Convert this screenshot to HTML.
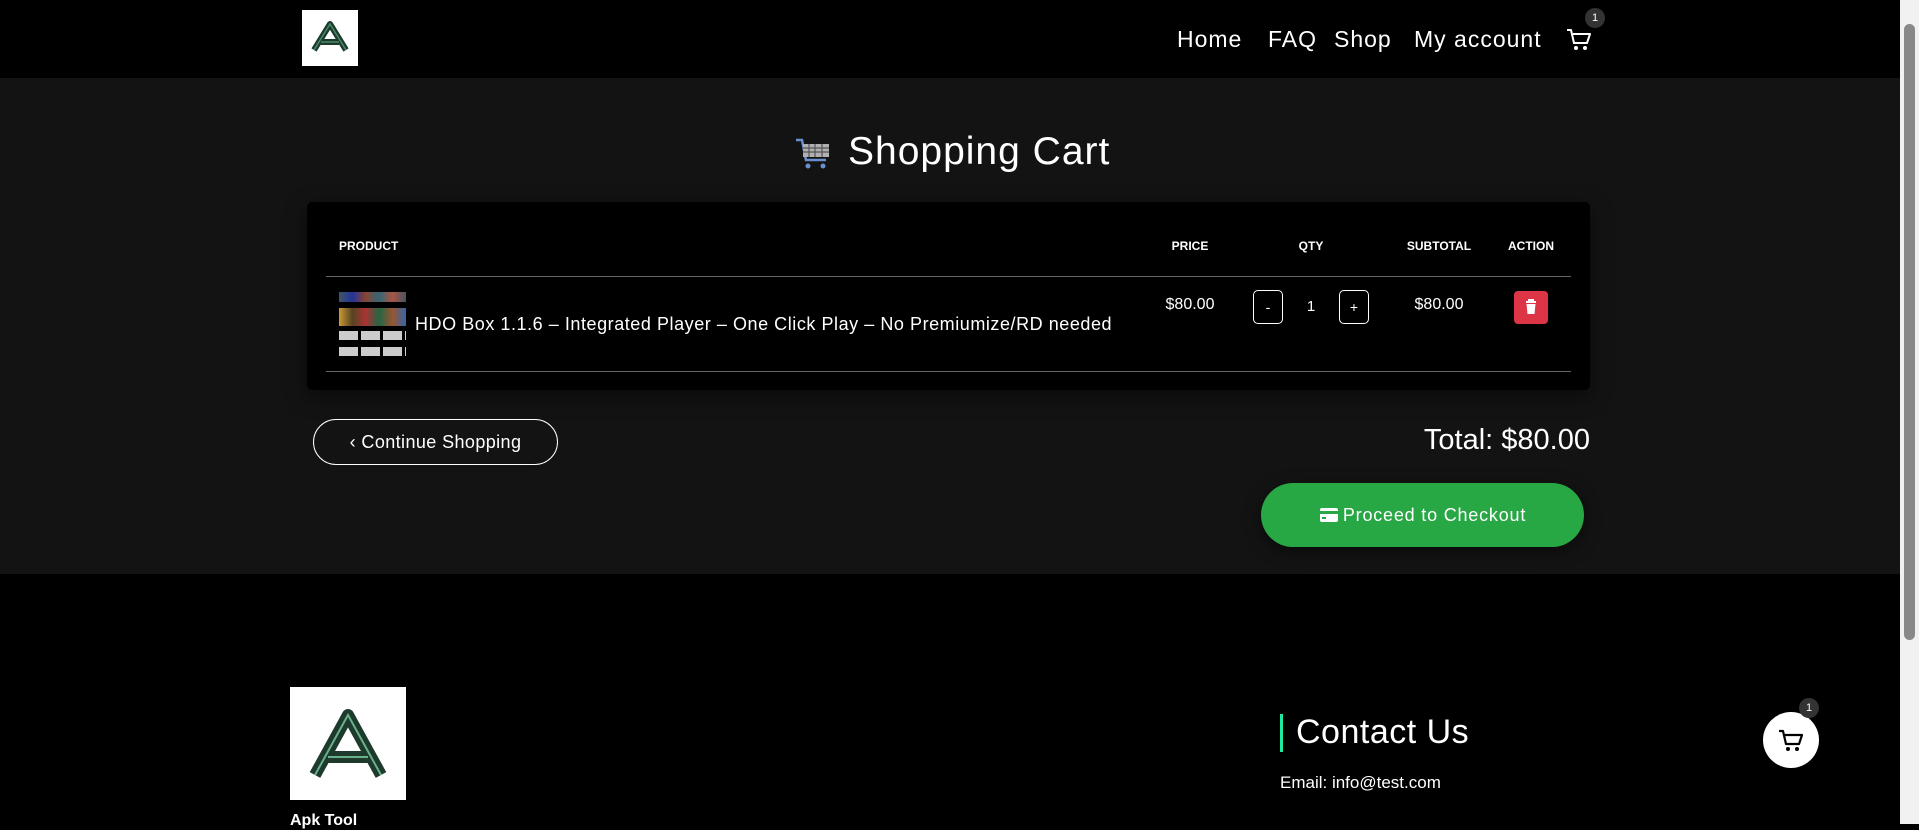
<!DOCTYPE html>
<html><head><meta charset="utf-8"><style>
*{box-sizing:border-box;margin:0;padding:0}
body{width:1919px;height:824px;overflow:hidden;background:#000;font-family:"Liberation Sans",sans-serif;color:#fff;position:relative}
.abs{position:absolute}
.hdr{left:0;top:0;width:1900px;height:78px;background:#000}
.main{left:0;top:78px;width:1900px;height:496px;background:#131313}
.nav{top:26px;font-size:23px;letter-spacing:1px;white-space:nowrap}
.th{top:239px;font-size:12px;font-weight:bold;transform:translateX(-50%)}
.btn{border:1px solid #fff;border-radius:5px;display:flex;align-items:center;justify-content:center;font-size:14px}
</style></head><body>
<div class="abs hdr"></div>
<div class="abs main"></div>
<div class="abs" style="left:302px;top:10px;width:56px;height:56px;background:#fff">
<svg width="56" height="56" viewBox="0 0 56 56"><path d="M12 40 L28 14 L44 40 M19 32 H37" fill="none" stroke="#1d3a2c" stroke-width="6" stroke-linejoin="round"/><path d="M12 40 L28 14 L44 40 M19 32 H37" fill="none" stroke="#4a8a6a" stroke-width="1.5"/></svg></div>
<div class="abs nav" style="left:1177px">Home</div>
<div class="abs nav" style="left:1268px">FAQ</div>
<div class="abs nav" style="left:1334px">Shop</div>
<div class="abs nav" style="left:1414px">My account</div>
<svg class="abs" style="left:1566px;top:28px" width="26" height="24" viewBox="0 0 26 24"><path d="M1 2h4l3 13h13l3-9H7" fill="none" stroke="#fff" stroke-width="2" stroke-linejoin="round"/><circle cx="10" cy="20" r="2" fill="#fff"/><circle cx="19" cy="20" r="2" fill="#fff"/></svg>
<div class="abs" style="left:1585px;top:8px;width:20px;height:20px;border-radius:50%;background:#333;font-size:11px;display:flex;align-items:center;justify-content:center">1</div>
<svg class="abs" style="left:794px;top:137px" width="38" height="34" viewBox="0 0 38 34"><path d="M2 3h6l4 20h20" fill="none" stroke="#6a8fcf" stroke-width="2.5"/><rect x="9" y="7" width="26" height="13" fill="#b0b0b0"/><path d="M9 11h26M9 15h26M15 7v13M21 7v13M28 7v13" stroke="#555" stroke-width="1.2"/><circle cx="14" cy="29" r="2.5" fill="#6a8fcf"/><circle cx="29" cy="29" r="2.5" fill="#6a8fcf"/></svg>
<div class="abs" style="left:848px;top:130px;font-size:39px;letter-spacing:1px">Shopping Cart</div>
<div class="abs" style="left:307px;top:202px;width:1283px;height:188px;background:#000;border-radius:5px;box-shadow:0 6px 20px rgba(0,0,0,.5)"></div>
<div class="abs th" style="left:339px;transform:none">PRODUCT</div>
<div class="abs th" style="left:1190px">PRICE</div>
<div class="abs th" style="left:1311px">QTY</div>
<div class="abs th" style="left:1439px">SUBTOTAL</div>
<div class="abs th" style="left:1531px">ACTION</div>
<div class="abs" style="left:326px;top:276px;width:1245px;height:1px;background:#666"></div>
<div class="abs" style="left:326px;top:371px;width:1245px;height:1px;background:#666"></div>
<div class="abs" style="left:339px;top:292px;width:67px;height:65px">
<div style="height:10px;background:linear-gradient(90deg,#456,#239,#843,#367,#a54,#456)"></div>
<div style="height:18px;margin-top:6px;background:linear-gradient(90deg,#c93,#542,#a33,#264,#953,#36a)"></div>
<div style="height:9px;margin-top:5px;background:repeating-linear-gradient(90deg,#ccc 0 19px,#000 19px 22px)"></div>
<div style="height:9px;margin-top:7px;background:repeating-linear-gradient(90deg,#ccc 0 19px,#000 19px 22px)"></div>
</div>
<div class="abs" style="left:415px;top:314px;font-size:18px;letter-spacing:0.55px;white-space:nowrap">HDO Box 1.1.6 – Integrated Player – One Click Play – No Premiumize/RD needed</div>
<div class="abs" style="left:1190px;top:296px;font-size:16px;transform:translateX(-50%)">$80.00</div>
<div class="abs btn" style="left:1253px;top:290px;width:30px;height:34px">-</div>
<div class="abs" style="left:1311px;top:298px;font-size:15px;transform:translateX(-50%)">1</div>
<div class="abs btn" style="left:1339px;top:290px;width:30px;height:34px">+</div>
<div class="abs" style="left:1439px;top:296px;font-size:16px;transform:translateX(-50%)">$80.00</div>
<div class="abs" style="left:1514px;top:291px;width:34px;height:33px;background:#dc3545;border-radius:4px">
<svg width="34" height="33" viewBox="0 0 34 33"><path d="M12 11h10M15 11v-2h4v2" stroke="#fff" stroke-width="2" fill="none"/><path d="M12.5 13h9l-1 10h-7z" fill="#fff"/></svg></div>
<div class="abs" style="left:313px;top:419px;width:245px;height:46px;border:1px solid #fff;border-radius:23px;display:flex;align-items:center;justify-content:center;font-size:18px;letter-spacing:0.4px">&#8249;&nbsp;Continue Shopping</div>
<div class="abs" style="right:329px;top:424px;font-size:29px">Total: $80.00</div>
<div class="abs" style="left:1261px;top:483px;width:323px;height:64px;background:#28a745;border-radius:32px;display:flex;align-items:center;justify-content:center;font-size:18px;letter-spacing:0.8px;box-shadow:0 4px 16px rgba(0,0,0,.5)">
<svg width="20" height="16" viewBox="0 0 20 16" style="margin-right:4px"><rect x="1" y="1" width="18" height="14" rx="2" fill="#fff"/><rect x="1" y="4" width="18" height="3" fill="#28a745"/><rect x="3" y="10" width="4" height="2" fill="#28a745"/></svg>Proceed to Checkout</div>
<div class="abs" style="left:290px;top:687px;width:116px;height:113px;background:#fff">
<svg width="116" height="113" viewBox="0 0 116 113"><path d="M25 88 L58 28 L91 88 M38 70 H78" fill="none" stroke="#1d3a2c" stroke-width="12" stroke-linejoin="round"/><path d="M25 88 L58 28 L91 88 M38 70 H78" fill="none" stroke="#6ab08a" stroke-width="2"/></svg></div>
<div class="abs" style="left:290px;top:812px;font-size:16px;font-weight:bold">Apk Tool</div>
<div class="abs" style="left:1280px;top:714px;width:3px;height:38px;background:#1de9a0"></div>
<div class="abs" style="left:1296px;top:713px;font-size:34px;letter-spacing:0.5px">Contact Us</div>
<div class="abs" style="left:1280px;top:773px;font-size:17px">Email: info@test.com</div>
<div class="abs" style="left:1763px;top:712px;width:56px;height:56px;border-radius:50%;background:#fff">
<svg width="56" height="56" viewBox="0 0 56 56"><path d="M16 19h4l3 13h13l3-9H22" fill="none" stroke="#000" stroke-width="2.2" stroke-linejoin="round"/><circle cx="25" cy="37" r="2" fill="#000"/><circle cx="34" cy="37" r="2" fill="#000"/></svg></div>
<div class="abs" style="left:1799px;top:698px;width:20px;height:20px;border-radius:50%;background:#333;font-size:11px;display:flex;align-items:center;justify-content:center">1</div>
<div class="abs" style="left:1900px;top:0;width:19px;height:824px;background:#f1f1f1"></div>
<div class="abs" style="left:1904px;top:24px;width:11px;height:616px;background:#888;border-radius:6px"></div>
</body></html>
